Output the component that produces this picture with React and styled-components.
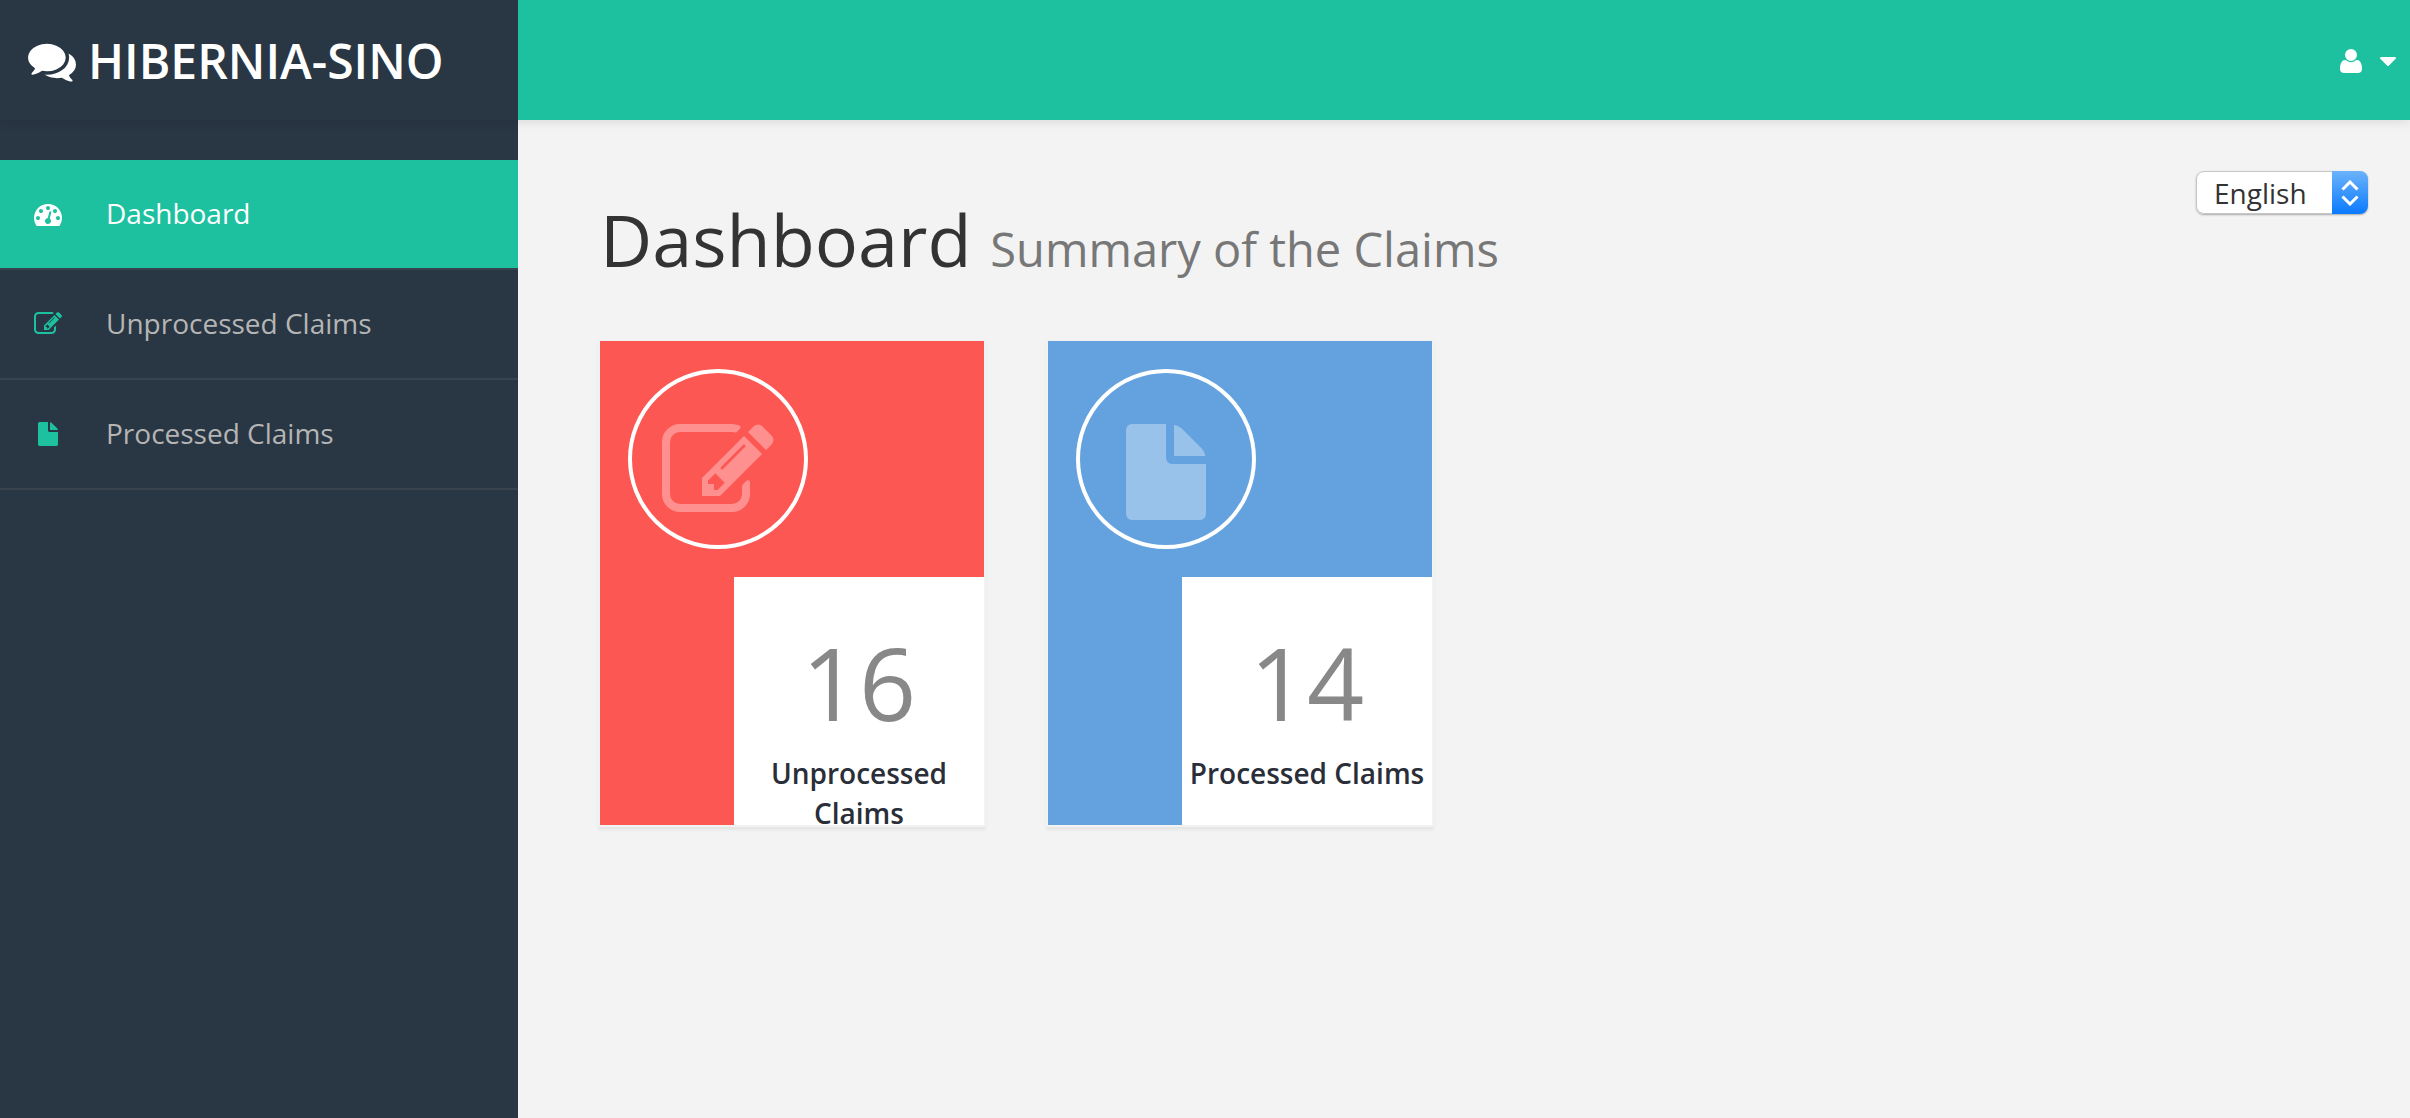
import React, { useState } from "react";
import styled, { createGlobalStyle } from "styled-components";

const GlobalStyle = createGlobalStyle`
  *, *::before, *::after { box-sizing: border-box; }
  body {
    margin: 0;
    background: #f3f3f3;
    color: #333;
    font-family: "Open Sans", "Noto Sans", sans-serif;
    font-size: 28px;
    line-height: 40px;
  }
`;

const Page = styled.div`
  display: grid;
  grid-template-columns: 518px 1fr;
  grid-template-rows: 120px 1fr;
  min-height: 100vh;
`;

const Header = styled.header`
  grid-column: 1 / -1;
  display: grid;
  grid-template-columns: subgrid;
  z-index: 1;
  box-shadow: 0 2px 10px rgba(0, 0, 0, 0.1);
`;

const Brand = styled.a`
  display: flex;
  align-items: center;
  gap: 12px;
  padding: 2px 28px 0;
  background: #293643;
  color: #fff;
  font-size: 48px;
  font-weight: 600;
  line-height: 68px;
  text-decoration: none;
  white-space: nowrap;
`;

const TopBar = styled.div`
  display: flex;
  align-items: center;
  justify-content: flex-end;
  padding: 2px 14px 0;
  background: #1dc1a0;
`;

const UserButton = styled.button`
  display: flex;
  align-items: center;
  gap: 18px;
  padding: 0;
  border: 0;
  background: none;
  color: #fff;
  cursor: pointer;
`;

const Sidebar = styled.nav`
  padding-top: 40px;
  background: #293643;
`;

const NavList = styled.ul`
  margin: 0;
  padding: 0;
  list-style: none;
`;

const NavLink = styled.a`
  display: grid;
  grid-template-columns: 28px 1fr;
  align-items: center;
  gap: 44px;
  height: 110px;
  padding-left: 34px;
  border-bottom: 2px solid #38434e;
  background: ${(p) => (p.$active ? "#1dc1a0" : "transparent")};
  color: ${(p) => (p.$active ? "#fff" : "#b5b5b5")};
  text-decoration: none;

  svg {
    color: ${(p) => (p.$active ? "#fff" : "#1dc1a0")};
  }
`;

const NavLabel = styled.span`
  padding-bottom: 2px;
`;

const Main = styled.main`
  display: flex;
  align-items: flex-start;
  padding: 51px 42px 40px 82px;
`;

const Content = styled.div`
  flex: 1;
  padding-top: 28px;
`;

const Title = styled.h1`
  margin: 0 0 62px;
  font-size: 72px;
  font-weight: 400;
  line-height: 80px;
`;

const Subtitle = styled.small`
  color: #777;
  font-size: 47px;
  line-height: 1;
`;

const Cards = styled.div`
  display: flex;
  flex-wrap: wrap;
  gap: 64px;
`;

const Card = styled.section`
  display: flex;
  flex-direction: column;
  width: 384px;
  height: 484px;
  background: ${(p) => p.$color};
  box-shadow: 0 0 0 2px #f2f2f2, 0 3px 3px 2px rgba(0, 0, 0, 0.06);
`;

const Badge = styled.div`
  display: flex;
  justify-content: center;
  flex: none;
  width: 180px;
  height: 180px;
  margin: 28px;
  padding-top: 43px;
  border: 4px solid #fff;
  border-radius: 50%;
  color: rgba(255, 255, 255, 0.35);
`;

const Tally = styled.div`
  flex: 1;
  align-self: flex-end;
  width: 250px;
  padding-top: 45px;
  background: #fff;
  overflow: hidden;
  text-align: center;
`;

const Count = styled.p`
  margin: 0;
  color: #888;
  font-size: 100px;
  line-height: 120px;
`;

const Label = styled.p`
  margin: 11px 0 0;
  padding: 0 4px;
  color: #292e38;
  font-weight: 600;
`;

const LanguagePicker = styled.label`
  display: grid;
  grid-template-columns: 136px 36px;
  height: 43px;
  border-radius: 8px;
  box-shadow: 0 1px 2px rgba(0, 0, 0, 0.3);
`;

const Select = styled.select`
  grid-area: 1 / 1 / 2 / 3;
  appearance: none;
  width: 100%;
  padding: 0 0 0 17px;
  border: 1px solid #c6c6c6;
  border-radius: 8px;
  background: #fff;
  color: #333;
  font: inherit;
`;

const Stepper = styled.span`
  grid-area: 1 / 2 / 2 / 3;
  display: flex;
  align-items: center;
  justify-content: center;
  z-index: 1;
  border-radius: 0 8px 8px 0;
  background: linear-gradient(#6cb3fa, #0a7aff);
  color: #fff;
  pointer-events: none;
`;

const Svg = styled.svg`
  display: block;
  flex: none;
  fill: currentColor;
`;

const CommentsIcon = () => (
  <Svg width="48" height="48" viewBox="0 0 1792 1792" aria-hidden="true">
    <path d="M1408 768q0 139-94 257t-256.500 186.500-353.500 68.500q-86 0-176-16-124 88-278 128-36 9-86 16h-3q-11 0-20.500-8t-11.500-21q-1-3-1-6.500t.5-6.500 2-6l2.500-5 3.500-5.500 4-5 4.500-5 4-4.500q5-6 23-25t26-29.500 22.500-29 25-38.500 20.500-44q-124-72-195-177t-71-224q0-139 94-257t256.500-186.500 353.500-68.500 353.500 68.500 256.500 186.500 94 257zm384 256q0 120-71 224.500t-195 176.500q10 24 20.500 44t25 38.500 22.500 29 26 29.500 23 25q1 1 4 4.500t4.500 5 4 5 3.500 5.500l2.500 5 2 6 .5 6.500-1 6.500q-3 14-13 22t-22 7q-50-7-86-16-154-40-278-128-90 16-176 16-271 0-472-132 58 4 88 4 161 0 309-45t264-129q125-92 192-212t67-254q0-77-23-152 129 71 204 178t75 230z" />
  </Svg>
);

const GaugeIcon = ({ size }) => (
  <Svg width={size} height={size} viewBox="0 0 1792 1792" aria-hidden="true">
    <path d="M384 1152q0-53-37.500-90.500t-90.500-37.500-90.500 37.500-37.500 90.500 37.500 90.500 90.500 37.500 90.500-37.500 37.500-90.500zm192-448q0-53-37.500-90.500t-90.500-37.500-90.500 37.500-37.500 90.500 37.500 90.500 90.500 37.500 90.500-37.500 37.500-90.500zm428 481l101-382q6-26-7.500-48.500t-38.500-29.500-48 6.500-30 39.500l-101 382q-60 5-107 43.500t-63 98.500q-20 77 20 146t117 89 146-20 89-117q16-60-6-117t-72-91zm660-33q0-53-37.500-90.500t-90.500-37.500-90.500 37.500-37.500 90.500 37.500 90.500 90.500 37.500 90.500-37.500 37.500-90.500zm-640-640q0-53-37.500-90.500t-90.500-37.500-90.500 37.500-37.500 90.500 37.500 90.500 90.500 37.500 90.500-37.500 37.500-90.500zm448 192q0-53-37.500-90.500t-90.500-37.500-90.500 37.500-37.500 90.500 37.500 90.500 90.500 37.500 90.500-37.500 37.500-90.500zm320 448q0 261-141 483-19 29-54 29h-1402q-35 0-54-29-141-221-141-483 0-182 71-348t191-286 286-191 348-71 348 71 286 191 191 286 71 348z" />
  </Svg>
);

const EditIcon = ({ size }) => (
  <Svg width={size} height={size} viewBox="0 0 1792 1792" aria-hidden="true">
    <path d="M888 1184l116-116-152-152-116 116v56h96v96h56zm440-720q-16-16-33 1l-350 350q-17 17-1 33t33-1l350-350q17-17 1-33zm80 594v190q0 119-84.500 203.500t-203.500 84.500h-832q-119 0-203.500-84.500t-84.500-203.500v-832q0-119 84.500-203.500t203.500-84.500h832q63 0 117 25 15 7 18 23 3 17-9 29l-49 49q-14 14-32 8-23-6-45-6h-832q-66 0-113 47t-47 113v832q0 66 47 113t113 47h832q66 0 113-47t47-113v-126q0-13 9-22l64-64q15-15 35-7t20 29zm-96-738l288 288-672 672h-288v-288zm444 132l-92 92-288-288 92-92q28-28 68-28t68 28l152 152q28 28 28 68t-28 68z" />
  </Svg>
);

const FileIcon = ({ size }) => (
  <Svg width={size} height={size} viewBox="-256 -128 1792 1792" aria-hidden="true">
    <path d="M0 96q0-40 28-68t68-28h544v544q0 40 28 68t68 28h544v800q0 40-28 68t-68 28h-1088q-40 0-68-28t-28-68zM768 512v-502q76 14 124 62l316 316q46 46 62 124z" />
  </Svg>
);

const UserIcon = () => (
  <Svg width="22" height="24" viewBox="0 0 1408 1536" aria-hidden="true">
    <path
      transform="translate(0 1408) scale(1 -1)"
      d="M1408 131q0 -120 -73 -189.500t-194 -69.500h-874q-121 0 -194 69.500t-73 189.500q0 53 3.500 103.500t14 109t26.500 108.500t43 97.500t62 81t85.500 53.500t111.500 20q9 0 42 -21.500t74.500 -48t108 -48t133.500 -21.500t133.500 21.500t108 48t74.500 48t42 21.500q61 0 111.500 -20t85.500 -53.500t62 -81t43 -97.500t26.500 -108.500t14 -109t3.500 -103.500zM1088 1024q0 -159 -112.500 -271.500t-271.500 -112.500t-271.500 112.500t-112.500 271.500t112.500 271.500t271.500 112.500t271.500 -112.500t112.500 -271.500z"
    />
  </Svg>
);

const CaretIcon = () => (
  <Svg width="16" height="9" viewBox="0 0 16 9" aria-hidden="true">
    <path d="M1 0h14q1 0 1 1 0 .4-.3.700l-7 7q-.7.600-1.400 0l-7-7q-.3-.3-.3-.7 0-1 1-1z" />
  </Svg>
);

const ChevronsIcon = () => (
  <svg width="18" height="26" viewBox="0 0 18 26" fill="none" stroke="currentColor" strokeWidth="3" aria-hidden="true">
    <path d="M1.500 9.500 9 2l7.500 7.500M1.500 16.500 9 24l7.500-7.500" />
  </svg>
);

const navItems = [
  { label: "Dashboard", Icon: GaugeIcon, active: true },
  { label: "Unprocessed Claims", Icon: EditIcon },
  { label: "Processed Claims", Icon: FileIcon },
];

const cards = [
  { label: "Unprocessed Claims", count: 16, color: "#fd5753", Icon: EditIcon },
  { label: "Processed Claims", count: 14, color: "#63a2df", Icon: FileIcon },
];

export default function App() {
  const [language, setLanguage] = useState("English");

  return (
    <>
      <GlobalStyle />
      <Page>
        <Header>
          <Brand href="#">
            <CommentsIcon />
            HIBERNIA-SINO
          </Brand>
          <TopBar>
            <UserButton type="button" aria-label="Account menu">
              <UserIcon />
              <CaretIcon />
            </UserButton>
          </TopBar>
        </Header>
        <Sidebar>
          <NavList>
            {navItems.map(({ label, Icon, active }) => (
              <li key={label}>
                <NavLink href="#" $active={active} aria-current={active ? "page" : undefined}>
                  <Icon size={28} />
                  <NavLabel>{label}</NavLabel>
                </NavLink>
              </li>
            ))}
          </NavList>
        </Sidebar>
        <Main>
          <Content>
            <Title>
              Dashboard <Subtitle>Summary of the Claims</Subtitle>
            </Title>
            <Cards>
              {cards.map(({ label, count, color, Icon }) => (
                <Card key={label} $color={color}>
                  <Badge>
                    <Icon size={112} />
                  </Badge>
                  <Tally>
                    <Count>{count}</Count>
                    <Label>{label}</Label>
                  </Tally>
                </Card>
              ))}
            </Cards>
          </Content>
          <LanguagePicker>
            <Select
              aria-label="Language"
              value={language}
              onChange={(e) => setLanguage(e.target.value)}
            >
              <option>English</option>
            </Select>
            <Stepper>
              <ChevronsIcon />
            </Stepper>
          </LanguagePicker>
        </Main>
      </Page>
    </>
  );
}
